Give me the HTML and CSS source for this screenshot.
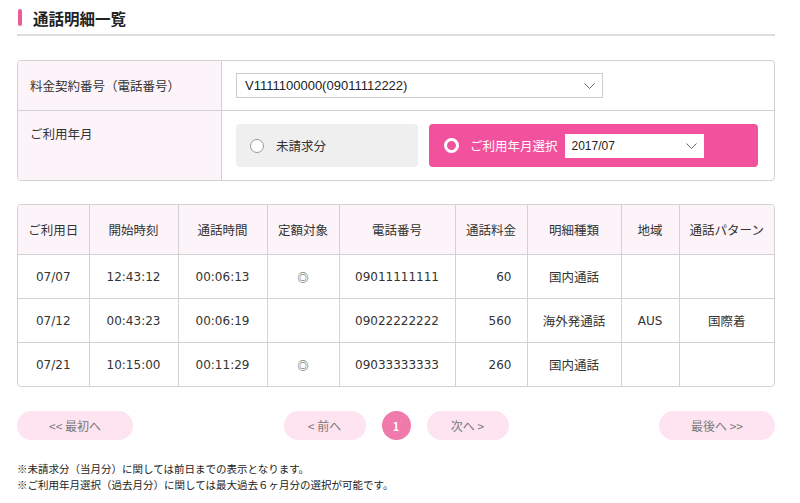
FILE: index.html
```html
<!DOCTYPE html>
<html lang="ja">
<head>
    <meta charset="UTF-8">
    <meta name="viewport" content="width=device-width, initial-scale=1.0">
    <title>通話明細一覧</title>
    <link rel="stylesheet" href="styles.css">
</head>
<body>
    <div id="page">
        <h1 class="title"><span class="title-bar"></span>通話明細一覧</h1>

        <div class="form-box">
            <div class="form-label">料金契約番号（電話番号）</div>
            <div class="form-field">
                <div class="select select-wide">
                    <span>V1111100000(09011112222)</span>
                    <svg class="chevron" width="11" height="6" viewBox="0 0 11 6"><path d="M0.5 0.5 L5.5 5.5 L10.5 0.5" fill="none" stroke="#666" stroke-width="1"/></svg>
                </div>
            </div>
            <div class="form-label form-label-top row2">ご利用年月</div>
            <div class="form-field row2 choices">
                <div class="choice choice-off">
                    <span class="radio"></span>
                    <span>未請求分</span>
                </div>
                <div class="choice choice-on">
                    <span class="radio"></span>
                    <span>ご利用年月選択</span>
                    <div class="select select-month">
                        <span>2017/07</span>
                        <svg class="chevron" width="11" height="6" viewBox="0 0 11 6"><path d="M0.5 0.5 L5.5 5.5 L10.5 0.5" fill="none" stroke="#666" stroke-width="1"/></svg>
                    </div>
                </div>
            </div>
        </div>

        <div class="table-box">
            <table id="calls">
                <colgroup>
                    <col style="width:71px"><col style="width:89px"><col style="width:89px">
                    <col style="width:72px"><col style="width:116px"><col style="width:72px">
                    <col style="width:94px"><col style="width:58px"><col style="width:95px">
                </colgroup>
                <thead>
                    <tr>
                        <th>ご利用日</th>
                        <th>開始時刻</th>
                        <th>通話時間</th>
                        <th>定額対象</th>
                        <th>電話番号</th>
                        <th>通話料金</th>
                        <th>明細種類</th>
                        <th>地域</th>
                        <th>通話パターン</th>
                    </tr>
                </thead>
                <tbody>
                    <tr>
                        <td class="num">07/07</td>
                        <td class="num">12:43:12</td>
                        <td class="num">00:06:13</td>
                        <td class="mark">◎</td>
                        <td class="num">09011111111</td>
                        <td class="num fee">60</td>
                        <td>国内通話</td>
                        <td></td>
                        <td></td>
                    </tr>
                    <tr>
                        <td class="num">07/12</td>
                        <td class="num">00:43:23</td>
                        <td class="num">00:06:19</td>
                        <td class="mark"></td>
                        <td class="num">09022222222</td>
                        <td class="num fee">560</td>
                        <td>海外発通話</td>
                        <td class="num">AUS</td>
                        <td>国際着</td>
                    </tr>
                    <tr>
                        <td class="num">07/21</td>
                        <td class="num">10:15:00</td>
                        <td class="num">00:11:29</td>
                        <td class="mark">◎</td>
                        <td class="num">09033333333</td>
                        <td class="num fee">260</td>
                        <td>国内通話</td>
                        <td></td>
                        <td></td>
                    </tr>
                </tbody>
            </table>
        </div>

        <div class="pager">
            <a class="pager-btn">&lt;&lt; 最初へ</a>
            <div class="pager-mid">
                <a class="pager-btn pager-small">&lt; 前へ</a>
                <span class="pager-current">1</span>
                <a class="pager-btn pager-small">次へ &gt;</a>
            </div>
            <a class="pager-btn">最後へ &gt;&gt;</a>
        </div>

        <div class="notes">
            <p>※未請求分（当月分）に関しては前日までの表示となります。</p>
            <p>※ご利用年月選択（過去月分）に関しては最大過去６ヶ月分の選択が可能です。</p>
        </div>
    </div>
</body>
</html>
```

FILE: styles.css
```css
body {
    margin: 0;
    background-color: #fff;
    color: #333;
    font-family: "Noto Sans CJK JP", "DejaVu Sans", sans-serif;
}

#page {
    width: 758px;
    padding: 9px 0 0 17px;
}

.title {
    display: flex;
    align-items: center;
    margin: 0;
    height: 17px;
    padding-bottom: 8px;
    border-bottom: 2px solid #ddd;
    font-size: 15.5px;
    font-weight: bold;
    color: #222;
}

.title-bar {
    display: inline-block;
    width: 4px;
    height: 17px;
    margin: 0 11px 0 1px;
    border-radius: 2px;
    background-color: #ee5a9c;
}

.form-box {
    display: grid;
    grid-template-columns: 204px 1fr;
    margin-top: 24px;
    border: 1px solid #d2d2d2;
    border-radius: 4px;
    overflow: hidden;
    font-size: 12.5px;
}

.form-label {
    display: flex;
    align-items: center;
    height: 49px;
    padding-left: 12px;
    background-color: #fdf4f9;
    border-right: 1px solid #d2d2d2;
}

.form-label-top {
    align-items: flex-start;
    height: auto;
    padding-top: 14px;
    line-height: 17px;
    box-sizing: border-box;
}

.form-field {
    display: flex;
    align-items: center;
    padding-left: 14px;
}

.row2 {
    border-top: 1px solid #d2d2d2;
    height: 70px;
}

.select {
    display: flex;
    align-items: center;
    justify-content: space-between;
    box-sizing: border-box;
    background-color: #fff;
    border: 1px solid #ccc;
    font-family: "Liberation Sans", "DejaVu Sans", sans-serif;
    color: #222;
}

.select-wide {
    width: 367px;
    height: 25px;
    padding: 0 7px 0 8px;
    font-size: 13px;
}

.select-month {
    width: 139px;
    height: 24px;
    margin-left: 7px;
    padding: 0 7px 0 7px;
    border: none;
    font-size: 12px;
}

.choices {
    align-items: flex-start;
    padding-top: 13px;
    box-sizing: border-box;
    gap: 11px;
}

.choice {
    display: flex;
    align-items: center;
    height: 43px;
    border-radius: 4px;
    box-sizing: border-box;
    padding-left: 14px;
}

.choice-off {
    width: 182px;
    background-color: #efefef;
    color: #333;
}

.choice-on {
    width: 329px;
    background-color: #f2529d;
    color: #fff;
}

.radio {
    display: inline-block;
    width: 14px;
    height: 14px;
    margin-right: 12px;
    border-radius: 50%;
    box-sizing: border-box;
    border: 1px solid #999;
    background-color: #fff;
}

.choice-on .radio {
    border: 3px solid #fff;
    background-color: transparent;
    width: 15px;
    height: 15px;
    margin-left: 1px;
    margin-right: 11px;
}

.table-box {
    margin-top: 23px;
    border: 1px solid #d2d2d2;
    border-radius: 4px;
    overflow: hidden;
}

#calls {
    width: 100%;
    border-collapse: collapse;
    table-layout: fixed;
    font-size: 12.5px;
}

#calls th,
#calls td {
    border-left: 1px solid #d2d2d2;
    border-top: 1px solid #d2d2d2;
    text-align: center;
    padding: 0;
    color: #333;
}

#calls th:first-child,
#calls td:first-child {
    border-left: none;
}

#calls thead th {
    border-top: none;
    height: 49px;
    font-weight: normal;
    background-color: #fdf4f9;
}

#calls td {
    height: 43px;
}

#calls td.num {
    font-family: "DejaVu Sans", sans-serif;
    font-size: 12px;
}

#calls td.fee {
    text-align: right;
    padding-right: 15px;
}

#calls td.mark {
    font-size: 11px;
    font-weight: bold;
    color: #555;
}

.pager {
    display: flex;
    justify-content: space-between;
    align-items: center;
    margin-top: 24px;
}

.pager-mid {
    display: flex;
    align-items: center;
    gap: 16px;
}

.pager-btn {
    display: flex;
    align-items: center;
    justify-content: center;
    width: 116px;
    height: 29px;
    border-radius: 15px;
    background-color: #fde4f0;
    color: #7a7a7a;
    font-size: 12px;
}

.pager-small {
    width: 82px;
}

.pager-current {
    display: flex;
    align-items: center;
    justify-content: center;
    width: 29px;
    height: 29px;
    border-radius: 50%;
    background-color: #f07aab;
    color: #fff;
    font-size: 11px;
    font-weight: bold;
}

.notes {
    margin-top: 21px;
    font-size: 10.5px;
    color: #222;
}

.notes p {
    margin: 0;
    line-height: 16px;
}
```
